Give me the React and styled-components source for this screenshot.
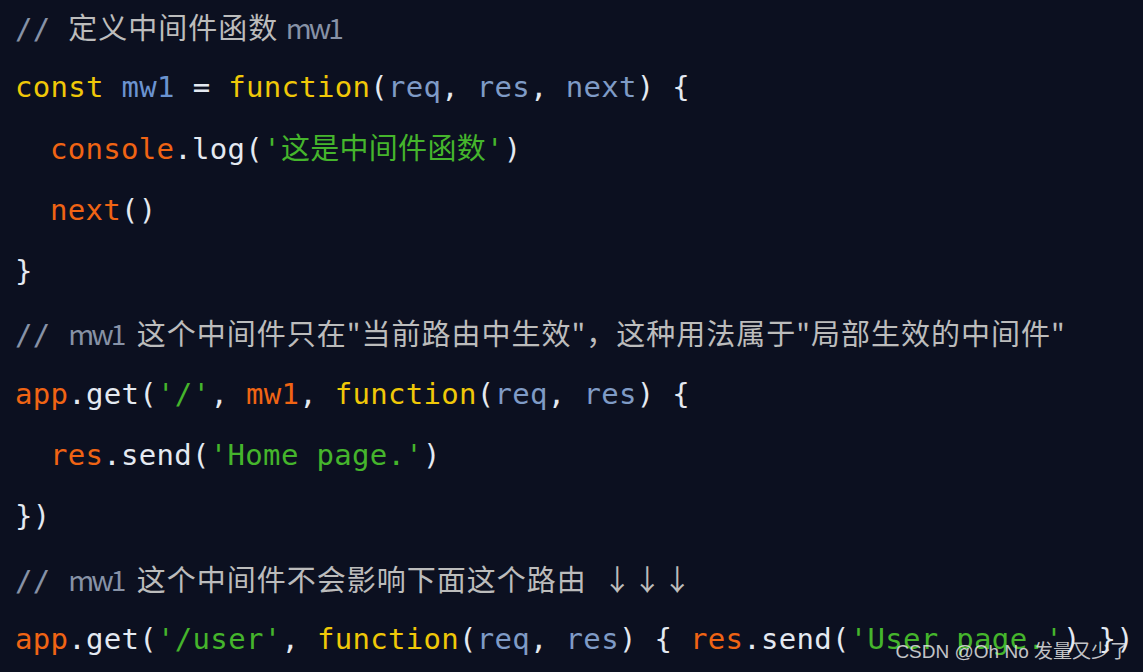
import styled, { createGlobalStyle } from 'styled-components'

const GlobalStyle = createGlobalStyle`
  html, body {
    margin: 0;
    padding: 0;
    background: #0c1020;
  }
`

const COLORS = {
  keyword: '#f0c808',
  variable: '#6b93d0',
  param: '#7f9bc6',
  ident: '#f06414',
  punc: '#e4e9f1',
  string: '#45b52c',
  commentMark: '#8792a6',
  commentText: '#bcbcbc'
}

const Page = styled.div`
  position: relative;
  width: 1143px;
  height: 672px;
  overflow: hidden;
  background: #0c1020;
`

const Code = styled.div`
  display: flex;
  flex-direction: column;
  padding: 0 0 0 15px;
  margin-top: -4px;
  font-family: 'DejaVu Sans Mono', 'Noto Sans CJK SC', monospace;
  font-size: 29px;
  letter-spacing: 0.3px;
  white-space: pre;
`

const Line = styled.div`
  height: 61.3px;
  line-height: 61.3px;
  padding-left: ${({ indent }) => (indent ? '35px' : '0')};
`

const Tok = styled.span`
  color: ${({ kind }) => COLORS[kind || 'punc']};
`

const CommentMark = styled.span`
  color: ${COLORS.commentMark};
`

const CommentBody = styled.span`
  font-family: 'Noto Sans CJK SC', 'Noto Sans', sans-serif;
  letter-spacing: 1px;
  color: ${COLORS.commentText};
`

const CommentRef = styled.span`
  color: ${COLORS.commentMark};
  font-size: 28px;
  letter-spacing: -3px;
  margin-right: 6px;
`

const Arrows = styled.span`
  margin-left: 16px;
  letter-spacing: 1px;
`

const Watermark = styled.div`
  position: absolute;
  right: 14px;
  bottom: 9px;
  font-family: 'Liberation Sans', 'Noto Sans CJK SC', sans-serif;
  font-size: 19px;
  color: rgba(230, 230, 230, 0.85);
  white-space: nowrap;
`

function Comment({ children }) {
  return (
    <Line>
      <CommentMark>{'// '}</CommentMark>
      <CommentBody>{children}</CommentBody>
    </Line>
  )
}

export default function App() {
  return (
    <Page>
      <GlobalStyle />
      <Code>
        <Comment>
          定义中间件函数 <CommentRef>mw1</CommentRef>
        </Comment>
        <Line>
          <Tok kind="keyword">const</Tok> <Tok kind="variable">mw1</Tok> <Tok>=</Tok>{' '}
          <Tok kind="keyword">function</Tok>
          <Tok>(</Tok>
          <Tok kind="param">req</Tok>
          <Tok>, </Tok>
          <Tok kind="param">res</Tok>
          <Tok>, </Tok>
          <Tok kind="param">next</Tok>
          <Tok>) {'{'}</Tok>
        </Line>
        <Line indent>
          <Tok kind="ident">console</Tok>
          <Tok>.log(</Tok>
          <Tok kind="string">'这是中间件函数'</Tok>
          <Tok>)</Tok>
        </Line>
        <Line indent>
          <Tok kind="ident">next</Tok>
          <Tok>()</Tok>
        </Line>
        <Line>
          <Tok>{'}'}</Tok>
        </Line>
        <Comment>
          <CommentRef>mw1</CommentRef> 这个中间件只在"当前路由中生效"，这种用法属于"局部生效的中间件"
        </Comment>
        <Line>
          <Tok kind="ident">app</Tok>
          <Tok>.get(</Tok>
          <Tok kind="string">'/'</Tok>
          <Tok>, </Tok>
          <Tok kind="ident">mw1</Tok>
          <Tok>, </Tok>
          <Tok kind="keyword">function</Tok>
          <Tok>(</Tok>
          <Tok kind="param">req</Tok>
          <Tok>, </Tok>
          <Tok kind="param">res</Tok>
          <Tok>) {'{'}</Tok>
        </Line>
        <Line indent>
          <Tok kind="ident">res</Tok>
          <Tok>.send(</Tok>
          <Tok kind="string">'Home page.'</Tok>
          <Tok>)</Tok>
        </Line>
        <Line>
          <Tok>{'})'}</Tok>
        </Line>
        <Comment>
          <CommentRef>mw1</CommentRef> 这个中间件不会影响下面这个路由<Arrows>↓↓↓</Arrows>
        </Comment>
        <Line>
          <Tok kind="ident">app</Tok>
          <Tok>.get(</Tok>
          <Tok kind="string">'/user'</Tok>
          <Tok>, </Tok>
          <Tok kind="keyword">function</Tok>
          <Tok>(</Tok>
          <Tok kind="param">req</Tok>
          <Tok>, </Tok>
          <Tok kind="param">res</Tok>
          <Tok>) {'{'} </Tok>
          <Tok kind="ident">res</Tok>
          <Tok>.send(</Tok>
          <Tok kind="string">'User page.'</Tok>
          <Tok>) {'})'}</Tok>
        </Line>
      </Code>
      <Watermark>CSDN @Oh No 发量又少了</Watermark>
    </Page>
  )
}
